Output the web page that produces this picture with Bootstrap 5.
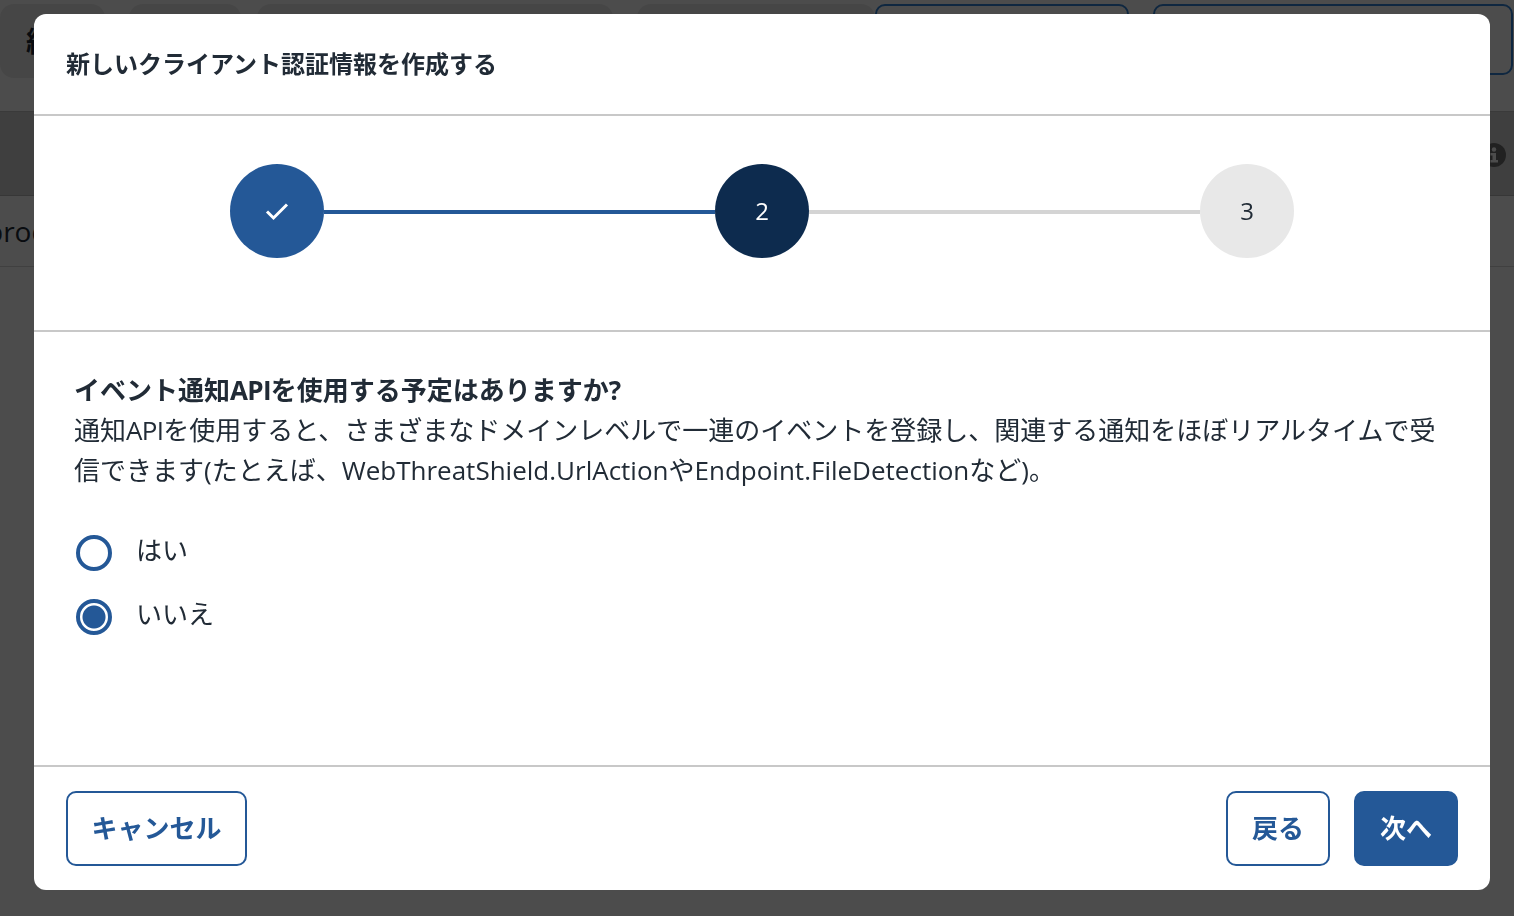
<!DOCTYPE html>
<html lang="ja">
<head>
  <meta charset="UTF-8">
  <meta name="viewport" content="width=device-width, initial-scale=1.0">
  <title>新しいクライアント認証情報を作成する</title>
  <link href="https://cdn.jsdelivr.net/npm/bootstrap@5.3.0/dist/css/bootstrap.min.css" rel="stylesheet">
  <style>
    body {
      font-family: "Open Sans", "Noto Sans CJK JP", sans-serif;
      color: #212b36;
      overflow: hidden;
    }

    /* page behind the dialog */
    .top-strip {
      height: 111px;
      padding: 4px 1px 0 0;
    }

    .fake-tab {
      height: 74px;
      background-color: #ebebeb;
      border-radius: 14px;
      font-size: 28px;
      font-weight: 700;
      line-height: 74px;
      padding-left: 26px;
      white-space: nowrap;
      overflow: hidden;
    }

    .fake-outline {
      height: 71px;
      border: 2px solid #3282d5;
      border-radius: 10px;
    }

    .head-strip {
      height: 85px;
      background-color: #d2d2d2;
      border-top: 1px solid #c4c4c4;
      border-bottom: 1px solid #b8b8b8;
      padding: 3px 8px 0 0;
    }

    .body-strip {
      height: 71px;
      font-size: 28px;
      border-bottom: 1px solid #d8d8d8;
      white-space: nowrap;
    }

    .body-strip span {
      margin-left: -14px;
    }

    .modal-backdrop.show {
      opacity: .7;
    }

    /* dialog */
    .wizard-dialog {
      width: 1456px;
      max-width: 1456px;
      margin: 14px 0 0 34px;
    }

    .wizard-dialog .modal-content {
      height: 876px;
      border: 0;
      border-radius: 12px;
    }

    .wizard-head {
      height: 102px;
      padding: 0 32px;
      border-bottom: 2px solid #c8c8c8;
    }

    .wizard-head h5 {
      font-size: 24px;
      font-weight: 700;
      margin: 0;
    }

    .wizard-steps {
      height: 216px;
      padding: 48px 196px 0;
      border-bottom: 2px solid #c8c8c8;
    }

    .step-dot {
      width: 94px;
      height: 94px;
      flex: none;
      border-radius: 50%;
      font-size: 24px;
    }

    .step-done { background-color: #245897; color: #fff; }
    .step-current { background-color: #0d2b4e; color: #fff; }
    .step-todo { background-color: #e8e8e8; }

    .step-link {
      flex: 1;
      height: 4px;
      margin-top: 46px;
    }

    .link-done { background-color: #245897; }
    .link-todo { background-color: #d4d4d4; }

    .wizard-body {
      padding: 38px 40px 0;
      font-size: 26px;
      line-height: 40px;
    }

    .wizard-body .question { font-weight: 700; }

    /* API sits a bit tighter than Open Sans sets it */
    .tight-latin { letter-spacing: -.7px; }

    .wizard-radio {
      display: flex;
      align-items: center;
      gap: 24px;
      min-height: 0;
      padding: 0 0 0 2px;
      margin: 0;
    }

    .wizard-radio .form-check-input {
      width: 36px;
      height: 36px;
      float: none;
      margin: 0;
      border: 4px solid #245897;
      flex: none;
    }

    .wizard-radio .form-check-input:checked {
      background-color: #fff;
      background-image: radial-gradient(circle, #245897 0 11px, #fff 12px);
    }

    .wizard-radio .form-check-label {
      margin-top: -6px;
    }

    .radio-list {
      gap: 28px;
      margin-top: 45px;
    }

    .wizard-foot {
      height: 125px;
      padding: 0 32px;
      border-top: 2px solid #c8c8c8;
    }

    .wizard-btn {
      height: 75px;
      padding: 0 24px;
      font-size: 26px;
      font-weight: 700;
      border-width: 2px;
      border-radius: 10px;
      --bs-btn-color: #245897;
      --bs-btn-border-color: #245897;
      --bs-btn-bg: #fff;
    }

    .wizard-btn.cancel-btn {
      padding: 0 23.5px;
    }

    .wizard-btn.solid {
      --bs-btn-color: #fff;
      --bs-btn-bg: #245897;
    }
  </style>
</head>
<body>
  <!-- page behind the dialog -->
  <div class="top-strip d-flex">
    <div class="fake-tab" style="width:105px">組織</div>
    <div class="fake-tab ms-4" style="width:112px"></div>
    <div class="fake-tab ms-3" style="width:356px"></div>
    <div class="fake-tab ms-4" style="width:238px"></div>
    <div class="fake-outline ms-auto" style="width:254px"></div>
    <div class="fake-outline ms-4" style="width:360px"></div>
  </div>
  <div class="head-strip d-flex align-items-center justify-content-end">
    <svg width="24" height="24" viewBox="0 0 24 24">
      <circle cx="12" cy="12" r="12" fill="#707070"/>
      <circle cx="12" cy="6.500" r="2.200" fill="#fff"/>
      <path d="M8.500 10h5.500v7h2v2.500H8.500V17h2v-4.500h-2z" fill="#fff"/>
    </svg>
  </div>
  <div class="body-strip d-flex align-items-center"><span>prod</span></div>
  <div class="modal-backdrop show"></div>

  <!-- dialog -->
  <div class="modal d-block" tabindex="-1">
    <div class="modal-dialog wizard-dialog">
      <div class="modal-content">
        <div class="wizard-head d-flex align-items-center">
          <h5>新しいクライアント認証情報を作成する</h5>
        </div>
        <div class="wizard-steps d-flex align-items-start">
          <div class="step-dot step-done d-flex align-items-center justify-content-center">
            <svg width="24" height="24" viewBox="0 0 24 24" fill="none" stroke="#fff" stroke-width="3">
              <path d="M2 12.500l6.500 6.500L22 5.500"/>
            </svg>
          </div>
          <div class="step-link link-done"></div>
          <div class="step-dot step-current d-flex align-items-center justify-content-center">2</div>
          <div class="step-link link-todo"></div>
          <div class="step-dot step-todo d-flex align-items-center justify-content-center">3</div>
        </div>
        <div class="wizard-body flex-grow-1">
          <div class="question">イベント通知<span class="tight-latin">API</span>を使用する予定はありますか?</div>
          <div>通知<span class="tight-latin">API</span>を使用すると、さまざまなドメインレベルで一連のイベントを登録し、関連する通知をほぼリアルタイムで受信できます(たとえば、WebThreatShield.UrlActionやEndpoint.FileDetectionなど)。</div>
          <div class="radio-list d-flex flex-column">
            <div class="form-check wizard-radio">
              <input class="form-check-input" type="radio" name="useApi" id="useYes">
              <label class="form-check-label" for="useYes">はい</label>
            </div>
            <div class="form-check wizard-radio">
              <input class="form-check-input" type="radio" name="useApi" id="useNo" checked>
              <label class="form-check-label" for="useNo">いいえ</label>
            </div>
          </div>
        </div>
        <div class="wizard-foot d-flex align-items-center">
          <button type="button" class="btn wizard-btn cancel-btn">キャンセル</button>
          <button type="button" class="btn wizard-btn ms-auto">戻る</button>
          <button type="button" class="btn wizard-btn solid ms-4">次へ</button>
        </div>
      </div>
    </div>
  </div>

  <script src="https://cdn.jsdelivr.net/npm/bootstrap@5.3.0/dist/js/bootstrap.bundle.min.js"></script>
</body>
</html>
